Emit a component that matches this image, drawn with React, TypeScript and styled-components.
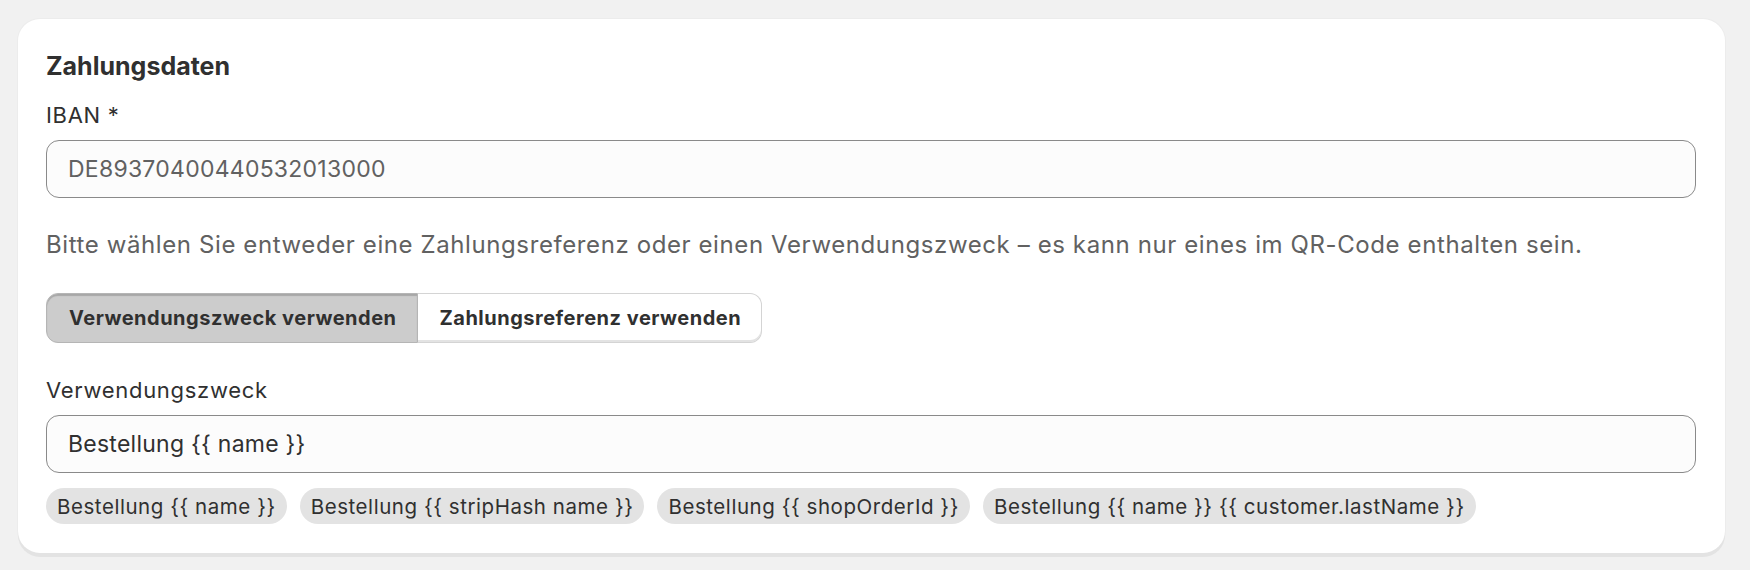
import styled, { createGlobalStyle } from 'styled-components'

const GlobalStyle = createGlobalStyle`
  html, body {
    margin: 0;
    padding: 0;
    background: #f1f1f1;
    font-family: Inter, "Noto Sans", sans-serif;
    color: #303030;
  }
`

const Page = styled.div`
  padding: 19px 25px 14px 18px;
`

const Card = styled.section`
  background: #fff;
  border-radius: 22px;
  box-shadow: 0 4px 0 0 #e3e3e3, 0 0 0 1px #ececec;
  padding: 32px 29px 29px 28px;
  display: flex;
  flex-direction: column;
`

const Title = styled.h2`
  margin: 0 0 21px;
  font-size: 25px;
  font-weight: 650;
  line-height: 30px;
  color: #303030;
`

const Field = styled.div`
  display: flex;
  flex-direction: column;
  gap: 12px;
`

const Label = styled.label`
  font-size: 22px;
  line-height: 26px;
  letter-spacing: 0.7px;
  color: #303030;
`

const Input = styled.input<{ $muted?: boolean }>`
  height: 58px;
  box-sizing: border-box;
  border: 1px solid #8a8a8a;
  border-radius: 13px;
  background: #fcfcfc;
  padding: 0 21px;
  font-family: inherit;
  font-size: 23px;
  letter-spacing: 0.25px;
  color: ${(p) => (p.$muted ? '#616161' : '#303030')};
  outline: none;
`

const Hint = styled.p`
  margin: 32px 0 33px;
  font-size: 24px;
  line-height: 30px;
  letter-spacing: 0.6px;
  color: #616161;
`

const Segmented = styled.div`
  display: flex;
  align-self: flex-start;
  margin-bottom: 34px;
`

const SegButton = styled.button<{ $active?: boolean }>`
  height: 50px;
  padding: 0 20px 0 22px;
  font-family: inherit;
  font-size: 20px;
  font-weight: 650;
  letter-spacing: 0.5px;
  color: #303030;
  border: 1px solid ${(p) => (p.$active ? '#b5b5b5' : '#d4d4d4')};
  background: ${(p) => (p.$active ? '#cccccc' : '#ffffff')};
  box-shadow: ${(p) =>
    p.$active ? 'inset 0 2px 1px rgba(0,0,0,0.18)' : 'inset 0 -2px 0 0 #e3e3e3'};
  cursor: pointer;
  &:first-child {
    border-radius: 12px 0 0 12px;
  }
  &:last-child {
    border-radius: 0 12px 12px 0;
    border-left: none;
  }
`

const Chips = styled.div`
  display: flex;
  flex-wrap: wrap;
  gap: 13px;
  margin-top: 15px;
`

const Chip = styled.button`
  height: 36px;
  padding: 0 11px;
  border: none;
  border-radius: 18px;
  background: #e3e3e3;
  font-family: inherit;
  font-size: 20.5px;
  letter-spacing: 0.55px;
  color: #303030;
  cursor: pointer;
`

const templates = [
  'Bestellung {{ name }}',
  'Bestellung {{ stripHash name }}',
  'Bestellung {{ shopOrderId }}',
  'Bestellung {{ name }} {{ customer.lastName }}',
]

export default function App() {
  return (
    <Page>
      <GlobalStyle />
      <Card>
        <Title>Zahlungsdaten</Title>
        <Field>
          <Label>IBAN *</Label>
          <Input $muted defaultValue="DE89370400440532013000" />
        </Field>
        <Hint>
          Bitte wählen Sie entweder eine Zahlungsreferenz oder einen Verwendungszweck – es kann
          nur eines im QR-Code enthalten sein.
        </Hint>
        <Segmented>
          <SegButton $active>Verwendungszweck verwenden</SegButton>
          <SegButton>Zahlungsreferenz verwenden</SegButton>
        </Segmented>
        <Field>
          <Label>Verwendungszweck</Label>
          <Input defaultValue="Bestellung {{ name }}" />
        </Field>
        <Chips>
          {templates.map((t) => (
            <Chip key={t}>{t}</Chip>
          ))}
        </Chips>
      </Card>
    </Page>
  )
}
